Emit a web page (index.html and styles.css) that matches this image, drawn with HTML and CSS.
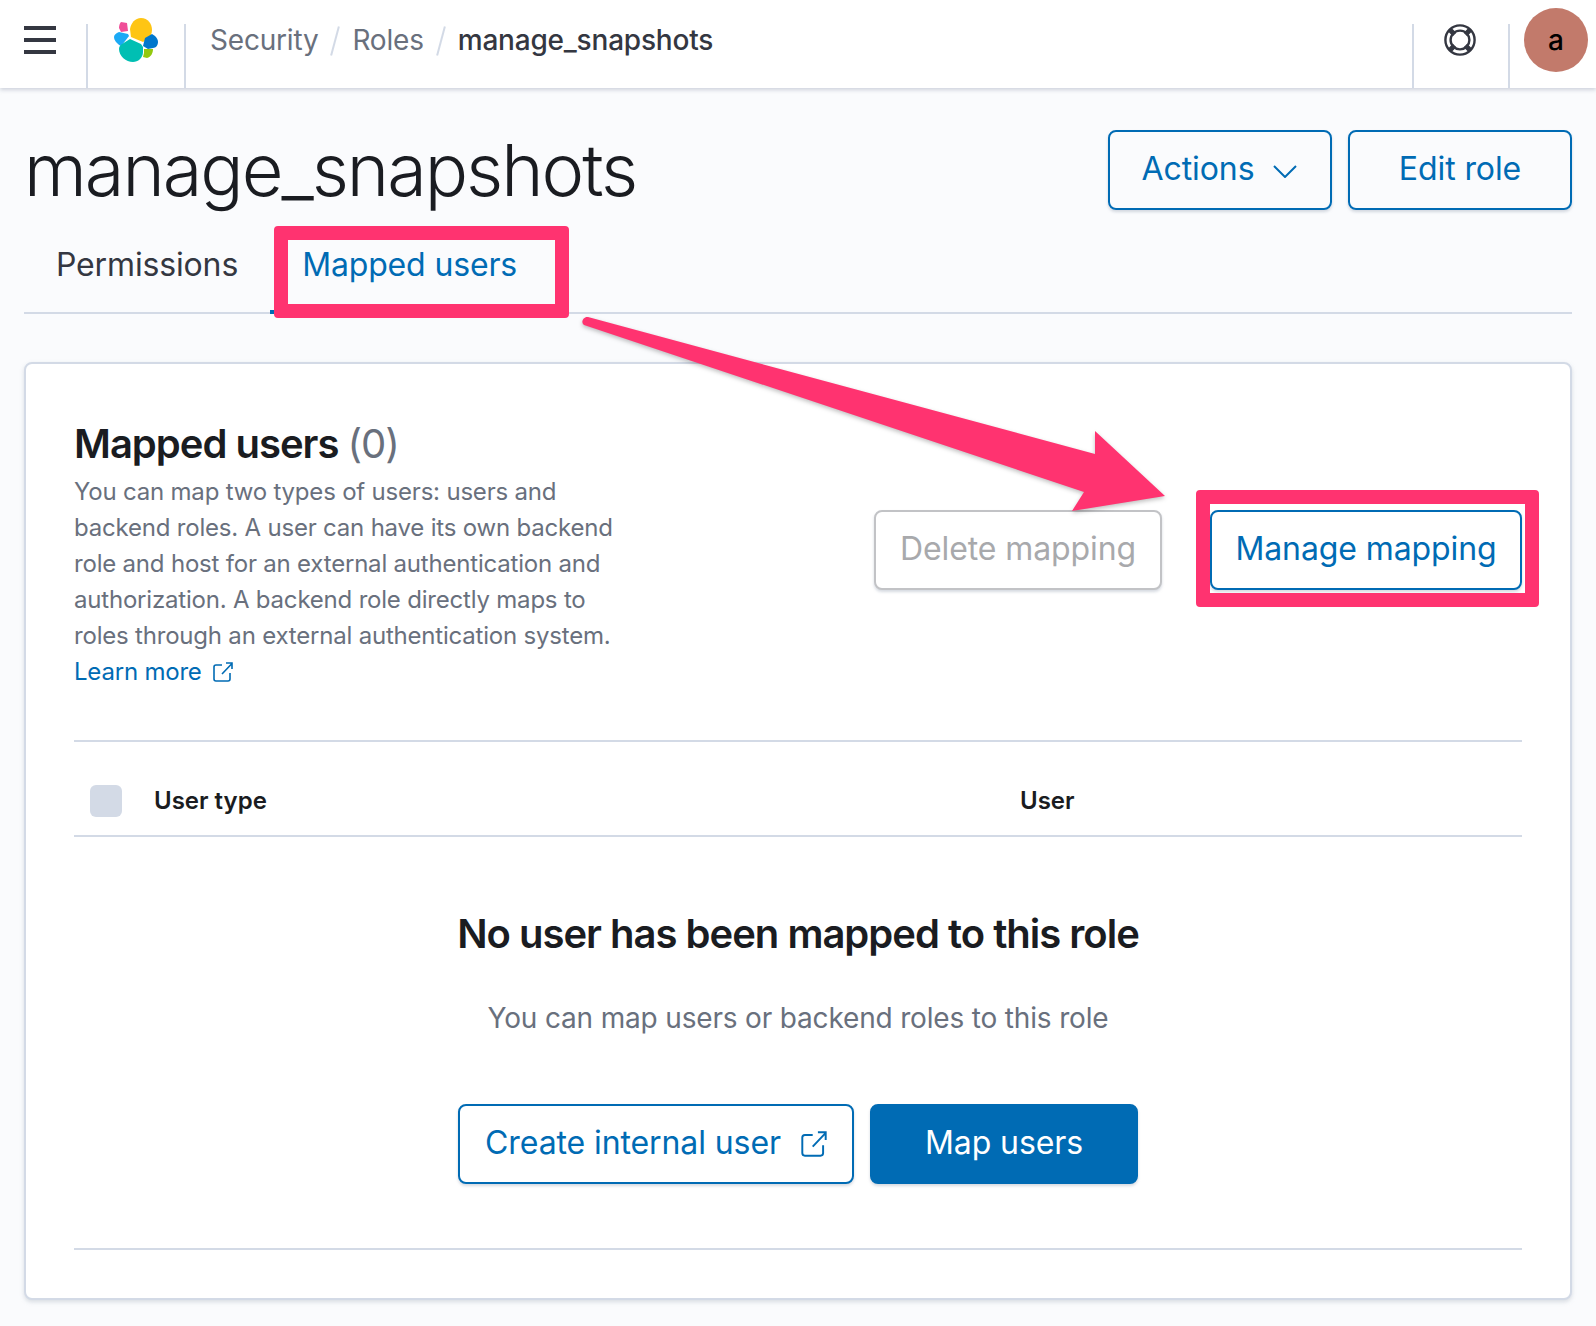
FILE: index.html
```html
<!DOCTYPE html>
<html lang="en">
    <head>
        <meta charset="UTF-8">
        <title>manage_snapshots - Roles - Security</title>
        <link rel="stylesheet" href="styles.css">
    </head>
    <body>
        <header class="topbar">
            <div class="topbar-cell menu-cell">
                <div class="hamburger"><span></span><span></span><span></span></div>
            </div>
            <div class="topbar-cell logo-cell">
                <svg class="logo" width="46" height="46" viewBox="114 17 46 46">
                    <path fill="#fec514" d="M141 18c7 0 11 6 11 12 0 4-2 7-4 9l-5 3-12-5-1-8c1-6 5-11 11-11z"/>
                    <path fill="#f04e98" d="M121 22l6 1 1 8-7 1-2-4c0-3 1-5 2-6z"/>
                    <path fill="#1ba9f5" d="M119 32l9 2 1 2-7 9-1 1c-4-2-7-6-7-9 0-2 2-4 5-5z"/>
                    <path fill="#0077cc" d="M152 34l3 2c2 2 3 4 3 6 0 3-2 6-5 6l-5 1-5-3 2-8z"/>
                    <path fill="#00bfb3" d="M130 39l11 5 2 3v5c0 6-5 10-10 10-7 0-14-6-14-13 0-2 1-4 3-5z"/>
                    <path fill="#93c90e" d="M144 49l9 0c0 4-2 8-6 9l-4-1 1-4z"/>
                </svg>
            </div>
            <nav class="breadcrumbs">
                <span>Security</span><i class="crumb-sep"></i>
                <span>Roles</span><i class="crumb-sep"></i>
                <span class="crumb-current">manage_snapshots</span>
            </nav>
            <div class="topbar-cell help-cell">
                <svg width="32" height="32" viewBox="0 0 32 32" fill="none" stroke="#343741" stroke-width="2.4">
                    <circle cx="16" cy="16" r="14.6"/>
                    <circle cx="16" cy="16" r="9.4"/>
                    <path d="M5.6 5.6l5 5M26.4 5.6l-5 5M5.6 26.4l5-5M26.4 26.4l-5-5" stroke-width="5"/>
                </svg>
            </div>
            <div class="avatar-cell">
                <div class="avatar">a</div>
            </div>
        </header>

        <main class="page">
            <div class="page-head">
                <h1>manage_snapshots</h1>
                <div class="head-actions">
                    <button class="btn btn-wide">Actions
                        <svg class="chevron" width="26" height="14" viewBox="0 0 26 14" fill="none" stroke="#006bb4" stroke-width="2"><path d="M2 2l11 11L24 2"/></svg>
                    </button>
                    <button class="btn btn-wide">Edit role</button>
                </div>
            </div>

            <div class="tabs">
                <div class="tab">Permissions</div>
                <div class="tab tab-active">Mapped users</div>
            </div>

            <section class="panel">
                <div class="panel-top">
                    <div class="panel-intro">
                        <h2>Mapped users <span class="count">(0)</span></h2>
                        <p>You can map two types of users: users and backend roles. A user can have its own backend role and host for an external authentication and authorization. A backend role directly maps to roles through an external authentication system.</p>
                        <a class="learn-more">Learn more
                            <svg width="20" height="20" viewBox="0 0 20 20" fill="none" stroke="#006bb4" stroke-width="1.6"><path d="M9 3H3a2 2 0 0 0-2 2v12a2 2 0 0 0 2 2h12a2 2 0 0 0 2-2v-6M9 12L19 1.500M13 1h6v6"/></svg>
                        </a>
                    </div>
                    <div class="panel-actions">
                        <button class="btn btn-disabled">Delete mapping</button>
                        <button class="btn btn-manage">Manage mapping</button>
                    </div>
                </div>

                <div class="table-head">
                    <div class="checkbox"></div>
                    <div class="col-type">User type</div>
                    <div class="col-user">User</div>
                </div>

                <div class="empty">
                    <h3>No user has been mapped to this role</h3>
                    <p>You can map users or backend roles to this role</p>
                    <div class="empty-actions">
                        <button class="btn btn-create">Create internal user
                            <svg width="26" height="26" viewBox="0 0 20 20" fill="none" stroke="#006bb4" stroke-width="1.5"><path d="M9 3H3a2 2 0 0 0-2 2v12a2 2 0 0 0 2 2h12a2 2 0 0 0 2-2v-6M9 12L19 1.500M13 1h6v6"/></svg>
                        </button>
                        <button class="btn btn-fill">Map users</button>
                    </div>
                </div>
            </section>
        </main>

        <!-- annotations drawn on top of the screenshot -->
        <div class="callout callout-tab"></div>
        <div class="callout callout-manage"></div>
        <svg class="arrow" width="1596" height="1326" viewBox="0 0 1596 1326">
            <path fill="#ff3370" d="M588 317L1095 454V431L1165 496L1072 511L1084 492L584 325C580 322 584 316 588 317Z"/>
        </svg>
    </body>
</html>
```

FILE: styles.css
```css
* {
    margin: 0; padding: 0; box-sizing: border-box;
}

html, body {
    width: 100%;
    height: 100%;
    background-color: #fafbfd;
    color: #1a1c21;
    font-family: Inter, "Noto Sans", sans-serif;
    overflow: hidden;
}

button {
    font-family: inherit;
    cursor: pointer;
}

.topbar {
    display: flex;
    height: 88px;
    background-color: white;
    box-shadow: 0 2px 4px rgba(152, 162, 179, 0.45);
    position: relative;
}

.topbar-cell {
    display: flex;
    align-items: center;
    justify-content: center;
    height: 64px;
    margin-top: 24px;
    border-right: 2px solid #d3dae6;
}

.menu-cell {
    width: 88px;
    justify-content: flex-start;
    padding-left: 24px;
    align-items: flex-start;
    padding-top: 2px;
}

.hamburger {
    display: flex;
    flex-direction: column;
    gap: 8px;
    width: 32px;
}

.hamburger span {
    height: 4px;
    background-color: #343741;
}

.logo-cell {
    width: 98px;
    align-items: flex-start;
}

.logo {
    margin-top: -7px;
    margin-left: 1px;
}

.breadcrumbs {
    flex: 1;
    display: flex;
    align-items: center;
    height: 80px;
    padding-left: 24px;
    font-size: 28px;
    letter-spacing: -0.2px;
    color: #69707d;
}

.crumb-sep {
    width: 2px;
    height: 30px;
    margin: 2px 16px 0;
    background-color: #d3dae6;
    transform: rotate(15deg);
}

.crumb-current {
    color: #343741;
    font-weight: 500;
}

.help-cell {
    width: 98px;
    border-left: 2px solid #d3dae6;
    align-items: flex-start;
    padding-right: 2px;
}

.avatar-cell {
    width: 86px;
    padding-top: 8px;
    padding-left: 14px;
}

.avatar {
    width: 64px;
    height: 64px;
    border-radius: 50%;
    background-color: #c27a6b;
    color: black;
    font-size: 28px;
    font-weight: 500;
    display: flex;
    align-items: center;
    justify-content: center;
}

.page {
    padding: 42px 24px 0;
}

.page-head {
    display: flex;
    justify-content: space-between;
    align-items: flex-start;
    height: 96px;
}

h1 {
    font-size: 72px;
    font-weight: 300;
    line-height: 80px;
    letter-spacing: -2px;
}

.head-actions {
    display: flex;
    gap: 16px;
}

.btn {
    display: inline-flex;
    align-items: center;
    justify-content: center;
    height: 80px;
    padding-bottom: 4px;
    border: 2px solid #006bb4;
    border-radius: 8px;
    background-color: transparent;
    color: #006bb4;
    font-size: 32px;
    letter-spacing: -0.1px;
    box-shadow: 0 2px 3px rgba(152, 162, 179, 0.4);
}

.btn-wide {
    width: 224px;
}

.chevron {
    margin-left: 18px;
    margin-top: 6px;
}

.tabs {
    display: flex;
    height: 88px;
    border-bottom: 2px solid #d3dae6;
}

.tab {
    padding: 17px 32px 0;
    font-size: 32px;
    line-height: 44px;
    letter-spacing: -0.15px;
    color: #343741;
}

.tab-active {
    color: #006bb4;
    border-bottom: 4px solid #006bb4;
    height: 88px;
}

.panel {
    margin-top: 48px;
    height: 938px;
    padding: 50px 48px 48px;
    background-color: white;
    border: 2px solid #d3dae6;
    border-radius: 8px;
    box-shadow: 0 2px 4px rgba(152, 162, 179, 0.35);
}

.panel-top {
    display: flex;
    justify-content: space-between;
    align-items: flex-start;
    height: 328px;
    border-bottom: 2px solid #d3dae6;
}

.panel-intro {
    width: 570px;
}

h2 {
    font-size: 40px;
    font-weight: 600;
    line-height: 60px;
    letter-spacing: -1px;
}

.count {
    font-weight: 400;
    color: #69707d;
}

.panel-intro p, .learn-more {
    font-size: 24px;
    line-height: 36px;
    letter-spacing: -0.2px;
    color: #69707d;
}

.learn-more {
    display: flex;
    align-items: center;
    gap: 11px;
    color: #006bb4;
}

.panel-actions {
    display: flex;
    gap: 48px;
    margin-top: 96px;
}

.btn-disabled {
    width: 288px;
    border-color: #c2c3c6;
    color: #a8a9ac;
    background-color: white;
}

.btn-manage {
    width: 312px;
    background-color: white;
}

.table-head {
    display: flex;
    align-items: center;
    height: 95px;
    padding-top: 24px;
    padding-left: 16px;
    border-bottom: 2px solid #d3dae6;
    font-size: 24px;
    font-weight: 600;
}

.checkbox {
    width: 32px;
    height: 32px;
    border-radius: 6px;
    background-color: #d3dae6;
    margin-right: 32px;
}

.col-type {
    width: 866px;
}

.empty {
    height: 413px;
    border-bottom: 2px solid #d3dae6;
    text-align: center;
    padding-top: 69px;
}

h3 {
    font-size: 40px;
    font-weight: 600;
    line-height: 56px;
    letter-spacing: -1px;
}

.empty p {
    margin-top: 32px;
    font-size: 28px;
    line-height: 48px;
    letter-spacing: -0.17px;
    color: #69707d;
}

.empty-actions {
    display: flex;
    justify-content: center;
    gap: 16px;
    margin-top: 62px;
}

.btn-create {
    width: 396px;
    gap: 20px;
    background-color: white;
}

.btn-create svg {
    margin-top: 4px;
}

.btn-fill {
    width: 268px;
    background-color: #006bb4;
    color: white;
}

.callout {
    position: absolute;
    border: 14px solid #ff3370;
    border-radius: 4px;
}

.callout-tab {
    left: 274px;
    top: 226px;
    width: 295px;
    height: 92px;
}

.callout-manage {
    left: 1196px;
    top: 490px;
    width: 343px;
    height: 117px;
}

.arrow {
    position: absolute;
    left: 0;
    top: 0;
    filter: drop-shadow(0 2px 2px rgba(0, 0, 0, 0.25));
}
```
